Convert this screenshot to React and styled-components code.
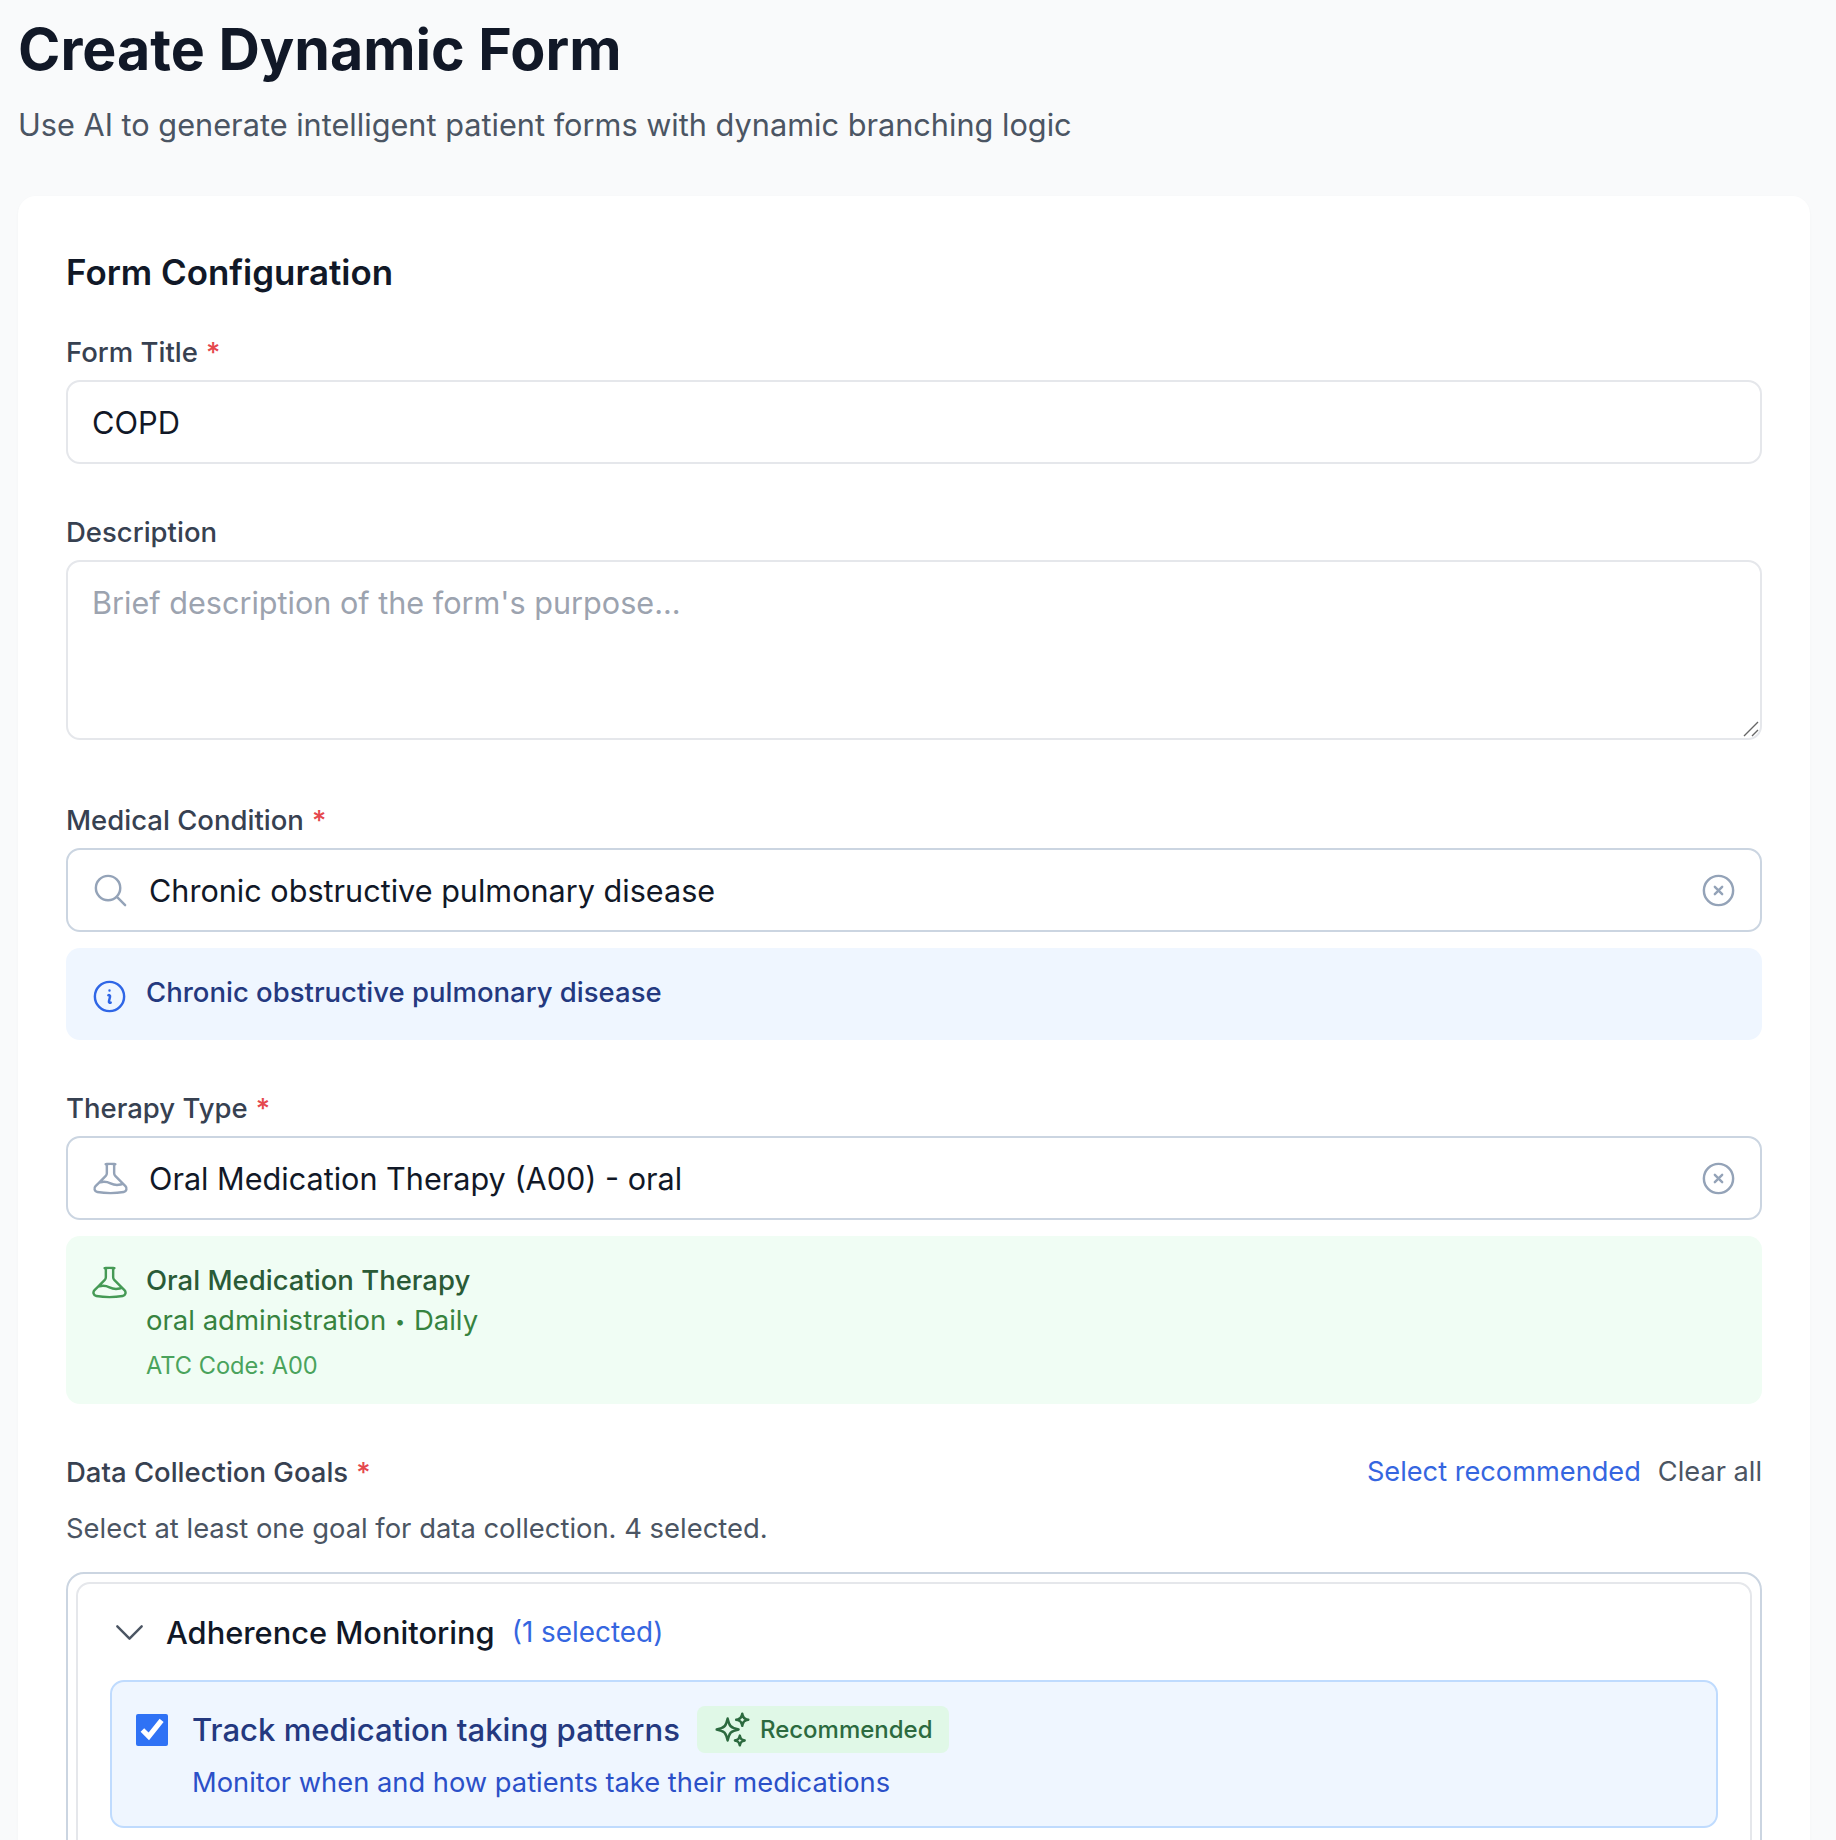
import React from "react";
import styled, { createGlobalStyle } from "styled-components";
import {
  HiOutlineMagnifyingGlass,
  HiOutlineXCircle,
  HiOutlineBeaker,
  HiOutlineInformationCircle,
  HiOutlineSparkles,
  HiOutlineChevronDown,
} from "react-icons/hi2";

const Global = createGlobalStyle`
  html, body { margin: 0; padding: 0; height: 1840px; overflow: hidden; background: #f9fafb; }
  * { box-sizing: border-box; }
  body { font-family: Inter, "Noto Sans", sans-serif; }
`;

const Page = styled.div`
  height: 1840px;
  overflow: hidden;
  padding: 18px 26px 0 18px;
  background: #f9fafb;
`;
const Title = styled.h1`
  margin: 0;
  font-size: 57.3px;
  line-height: 62px;
  font-weight: 700;
  color: #111827;
`;
const Subtitle = styled.p`
  margin: 25px 0 0;
  font-size: 30.7px;
  line-height: 40px;
  color: #4b5563;
`;
const Card = styled.section`
  margin-top: 51px;
  background: #fff;
  border-radius: 18px;
  padding: 55px 48px 0;
  box-shadow: 0 1px 3px rgba(0, 0, 0, 0.03);
`;
const CardHeading = styled.h2`
  margin: 0 0 41px;
  font-size: 34.9px;
  line-height: 42px;
  font-weight: 600;
  color: #111827;
`;
const Field = styled.div`
  margin-bottom: ${(p) => p.$gap ?? 0}px;
`;
const Label = styled.label`
  display: block;
  font-size: 27.5px;
  line-height: 36px;
  font-weight: 500;
  color: #374151;
  margin-bottom: ${(p) => p.$gap ?? 10}px;
`;
const Star = styled.span`
  color: #e5484d;
  margin-left: 8px;
`;
const TextInput = styled.input`
  display: block;
  width: 100%;
  height: 84px;
  padding: 0 24px;
  border: 2px solid #e5e7eb;
  border-radius: 14px;
  font: 400 30.8px Inter, sans-serif;
  color: #111827;
  background: #fff;
  outline: none;
`;
const TextAreaWrap = styled.div`
  position: relative;
`;
const TextArea = styled.textarea`
  display: block;
  width: 100%;
  height: 180px;
  padding: 19px 24px;
  border: 2px solid #e5e7eb;
  border-radius: 14px;
  font: 400 30.6px/1.45 Inter, sans-serif;
  color: #111827;
  background: #fff;
  outline: none;
  resize: none;
  &::placeholder { color: #9ca3af; opacity: 1; }
`;
const Grip = styled.svg`
  position: absolute;
  right: 3px;
  bottom: 3px;
  width: 16px;
  height: 16px;
  stroke: #666;
  stroke-width: 1.4;
  fill: none;
`;
const SearchBox = styled.div`
  height: 84px;
  display: flex;
  align-items: center;
  padding: 0 22px 0 23px;
  border: 2px solid #cbd5e1;
  border-radius: 14px;
  background: #fff;
  color: #94a3b8;
`;
const SearchText = styled.span`
  flex: 1;
  margin-left: 19px;
  font-size: 30.6px;
  color: #111827;
`;
const Info = styled.div`
  margin-top: 16px;
  height: 92px;
  display: flex;
  align-items: center;
  gap: 17px;
  padding: 0 24px;
  background: #eff6ff;
  border-radius: 14px;
  color: #2f66e6;
`;
const InfoIcon = styled(HiOutlineInformationCircle)`
  margin-top: 4px;
`;
const InfoText = styled.span`
  font-size: 27.5px;
  font-weight: 500;
  color: #24397f;
  margin-top: -4px;
`;
const Therapy = styled.div`
  margin-top: 16px;
  height: 168px;
  display: flex;
  gap: 17px;
  padding: 25px 24px;
  background: #f0fdf4;
  border-radius: 14px;
  color: #459a55;
`;
const TherapyIcon = styled(HiOutlineBeaker)`
  flex: none;
  margin-top: 2px;
`;
const TherapyName = styled.div`
  font-size: 27.5px;
  line-height: 39px;
  font-weight: 500;
  color: #2a5b37;
`;
const TherapyMeta = styled.div`
  font-size: 27.5px;
  line-height: 40px;
  color: #37833f;
`;
const Dot = styled.span`
  font-size: 18px;
  margin: 0 1px;
  vertical-align: 2px;
`;
const TherapyCode = styled.div`
  font-size: 23.6px;
  line-height: 40px;
  margin-top: 4px;
  color: #4aa35c;
`;
const GoalsField = styled.div`
  margin-top: 50px;
`;
const GoalsHead = styled.div`
  display: flex;
  justify-content: space-between;
  align-items: center;
`;
const Actions = styled.div`
  display: flex;
  gap: 17px;
  font-size: 27.2px;
  line-height: 36px;
`;
const Action = styled.span`
  color: ${(p) => (p.$primary ? "#3566e0" : "#4b5563")};
`;
const Help = styled.p`
  margin: 20px 0 0;
  font-size: 27.4px;
  line-height: 36px;
  color: #4b5563;
`;
const GoalsBox = styled.div`
  margin-top: 26px;
  padding: 8px;
  border: 2px solid #cbd5e1;
  border-radius: 18px;
`;
const Group = styled.div`
  border: 2px solid #e5e7eb;
  border-radius: 14px;
  padding: 0 32px 40px;
`;
const GroupHead = styled.div`
  height: 96px;
  display: flex;
  align-items: center;
  color: #4b5563;
`;
const GroupName = styled.span`
  margin-left: 17px;
  font-size: 30.8px;
  font-weight: 500;
  color: #111827;
`;
const GroupCount = styled.span`
  margin-left: 17px;
  font-size: 27.9px;
  color: #3566e0;
`;
const Goal = styled.div`
  height: 148px;
  display: flex;
  gap: 24px;
  padding: 24px 24px 0 24px;
  background: #eff6ff;
  border: 2px solid #bfdbfe;
  border-radius: 14px;
`;
const Check = styled.input`
  width: 32px;
  height: 32px;
  margin: 8px 0 0;
  flex: none;
  accent-color: #2f72f5;
`;
const GoalTitleRow = styled.div`
  display: flex;
  align-items: center;
  gap: 17px;
`;
const GoalTitle = styled.span`
  font-size: 31.1px;
  font-weight: 500;
  color: #24397f;
`;
const Badge = styled.span`
  height: 47px;
  display: inline-flex;
  align-items: center;
  gap: 8px;
  padding: 0 16px;
  background: #e0f8e7;
  border-radius: 8px;
  font-size: 24px;
  font-weight: 500;
  color: #2c6a3f;
`;
const GoalDesc = styled.div`
  margin-top: 12px;
  font-size: 27.3px;
  line-height: 36px;
  color: #2b50c8;
`;

export default function App() {
  return (
    <Page>
      <Global />
      <Title>Create Dynamic Form</Title>
      <Subtitle>Use AI to generate intelligent patient forms with dynamic branching logic</Subtitle>
      <Card>
        <CardHeading>Form Configuration</CardHeading>
        <Field $gap={50}>
          <Label>Form Title<Star>*</Star></Label>
          <TextInput defaultValue="COPD" readOnly />
        </Field>
        <Field $gap={62}>
          <Label>Description</Label>
          <TextAreaWrap>
            <TextArea placeholder="Brief description of the form's purpose..." readOnly />
            <Grip viewBox="0 0 16 16">
              <path d="M1 15 L15 1 M9 15 L15 9" />
            </Grip>
          </TextAreaWrap>
        </Field>
        <Field $gap={50}>
          <Label>Medical Condition<Star>*</Star></Label>
          <SearchBox>
            <HiOutlineMagnifyingGlass size={39} />
            <SearchText>Chronic obstructive pulmonary disease</SearchText>
            <HiOutlineXCircle size={39} />
          </SearchBox>
          <Info>
            <InfoIcon size={39} />
            <InfoText>Chronic obstructive pulmonary disease</InfoText>
          </Info>
        </Field>
        <Field>
          <Label>Therapy Type<Star>*</Star></Label>
          <SearchBox>
            <HiOutlineBeaker size={39} />
            <SearchText>Oral Medication Therapy (A00) - oral</SearchText>
            <HiOutlineXCircle size={39} />
          </SearchBox>
          <Therapy>
            <TherapyIcon size={39} />
            <div>
              <TherapyName>Oral Medication Therapy</TherapyName>
              <TherapyMeta>oral administration <Dot>•</Dot> Daily</TherapyMeta>
              <TherapyCode>ATC Code: A00</TherapyCode>
            </div>
          </Therapy>
        </Field>
        <GoalsField>
          <GoalsHead>
            <Label $gap={0}>Data Collection Goals<Star>*</Star></Label>
            <Actions>
              <Action $primary>Select recommended</Action>
              <Action>Clear all</Action>
            </Actions>
          </GoalsHead>
          <Help>Select at least one goal for data collection. 4 selected.</Help>
          <GoalsBox>
            <Group>
              <GroupHead>
                <HiOutlineChevronDown size={39} />
                <GroupName>Adherence Monitoring</GroupName>
                <GroupCount>(1 selected)</GroupCount>
              </GroupHead>
              <Goal>
                <Check type="checkbox" defaultChecked readOnly />
                <div>
                  <GoalTitleRow>
                    <GoalTitle>Track medication taking patterns</GoalTitle>
                    <Badge><HiOutlineSparkles size={39} />Recommended</Badge>
                  </GoalTitleRow>
                  <GoalDesc>Monitor when and how patients take their medications</GoalDesc>
                </div>
              </Goal>
            </Group>
          </GoalsBox>
        </GoalsField>
      </Card>
    </Page>
  );
}
